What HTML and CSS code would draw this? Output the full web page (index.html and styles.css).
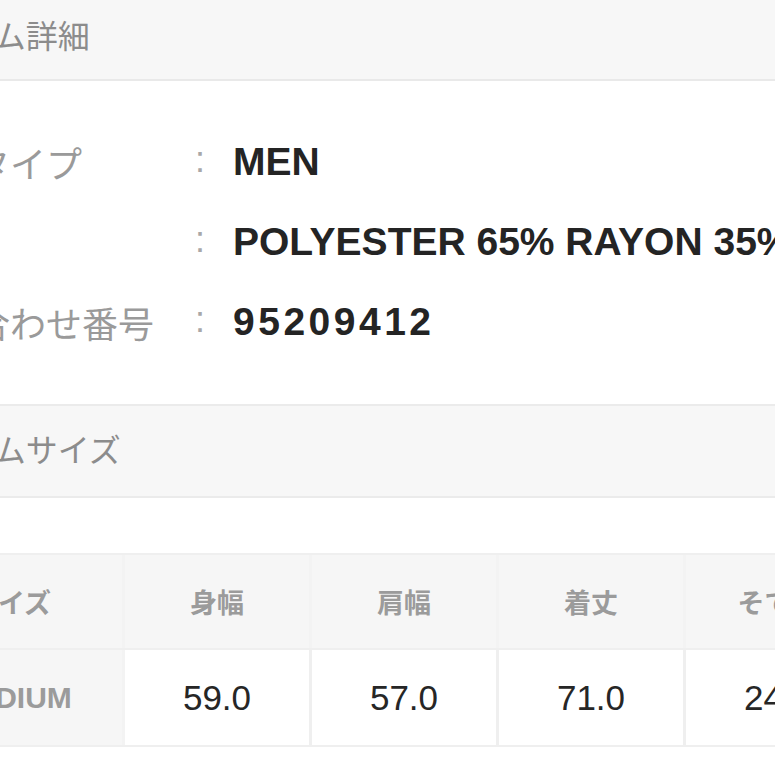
FILE: index.html
```html
<!DOCTYPE html>
<html lang="ja">
<head>
<meta charset="utf-8">
<title>アイテム詳細</title>
<link rel="stylesheet" href="styles.css">
</head>
<body>
<div class="page">
  <div class="sec-head sec-head-first">アイテム詳細</div>
  <div class="info">
    <div class="row"><div class="label">商品タイプ</div><div class="colon">:</div><div class="value">MEN</div></div>
    <div class="row"><div class="label">素材</div><div class="colon">:</div><div class="value">POLYESTER 65% RAYON 35%</div></div>
    <div class="row"><div class="label">問い合わせ番号</div><div class="colon">:</div><div class="value value-num">95209412</div></div>
  </div>
  <div class="sec-head sec-head-second">アイテムサイズ</div>
  <div class="size-table">
    <div class="th th-first">サイズ</div>
    <div class="th">身幅</div>
    <div class="th">肩幅</div>
    <div class="th">着丈</div>
    <div class="th">そで丈</div>
    <div class="td td-first">MEDIUM</div>
    <div class="td">59.0</div>
    <div class="td">57.0</div>
    <div class="td">71.0</div>
    <div class="td">24.0</div>
  </div>
</div>
</body>
</html>
```
FILE: styles.css
```css
html, body {
  margin: 0;
  padding: 0;
  background: #ffffff;
  overflow: hidden;
}
body {
  width: 775px;
  height: 775px;
  font-family: "Liberation Sans", "Noto Sans CJK JP", sans-serif;
}
.page {
  margin-left: -100px;
  width: 1100px;
}
.sec-head {
  box-sizing: border-box;
  background: #f7f7f7;
  color: #8c8c8c;
  font-size: 32px;
  display: flex;
  align-items: center;
  padding-left: 1px;
}
.sec-head-first {
  height: 81px;
  padding-bottom: 12px;
  border-bottom: 2px solid #e9e9e9;
}
.sec-head-second {
  height: 94px;
  padding-bottom: 6px;
  border-top: 2px solid #ebebeb;
  border-bottom: 2px solid #ebebeb;
}
.info {
  padding: 41px 0 42px;
}
.row {
  height: 80px;
  display: flex;
  align-items: center;
}
.label {
  box-sizing: border-box;
  width: 295px;
  padding-left: 2px;
  flex: none;
  color: #9a9a9a;
  font-size: 36px;
  white-space: nowrap;
}
.colon {
  width: 38px;
  flex: none;
  color: #a8a8a8;
  font-size: 36px;
  padding-bottom: 4px;
}
.value {
  color: #242424;
  font-size: 39px;
  font-weight: bold;
  white-space: nowrap;
}
.value-num {
  letter-spacing: 3.5px;
}
.size-table {
  margin-top: 55px;
  display: grid;
  grid-template-columns: 222px repeat(4, 184px);
  grid-template-rows: 93px 95px;
  column-gap: 3px;
  row-gap: 2px;
  padding: 2px 0;
  background: #efefef;
}
.th, .td {
  display: flex;
  align-items: center;
  justify-content: center;
  white-space: nowrap;
}
.th {
  background: #f6f6f6;
  box-shadow: 3px 0 0 #f3f3f3;
  color: #9b9b9b;
  font-size: 27px;
  font-weight: bold;
}
.td {
  background: #ffffff;
  color: #262626;
  font-size: 35px;
}
.td-first {
  background: #f6f6f6;
  box-shadow: 3px 0 0 #f3f3f3;
  color: #9b9b9b;
  font-size: 30px;
  font-weight: bold;
}
```
